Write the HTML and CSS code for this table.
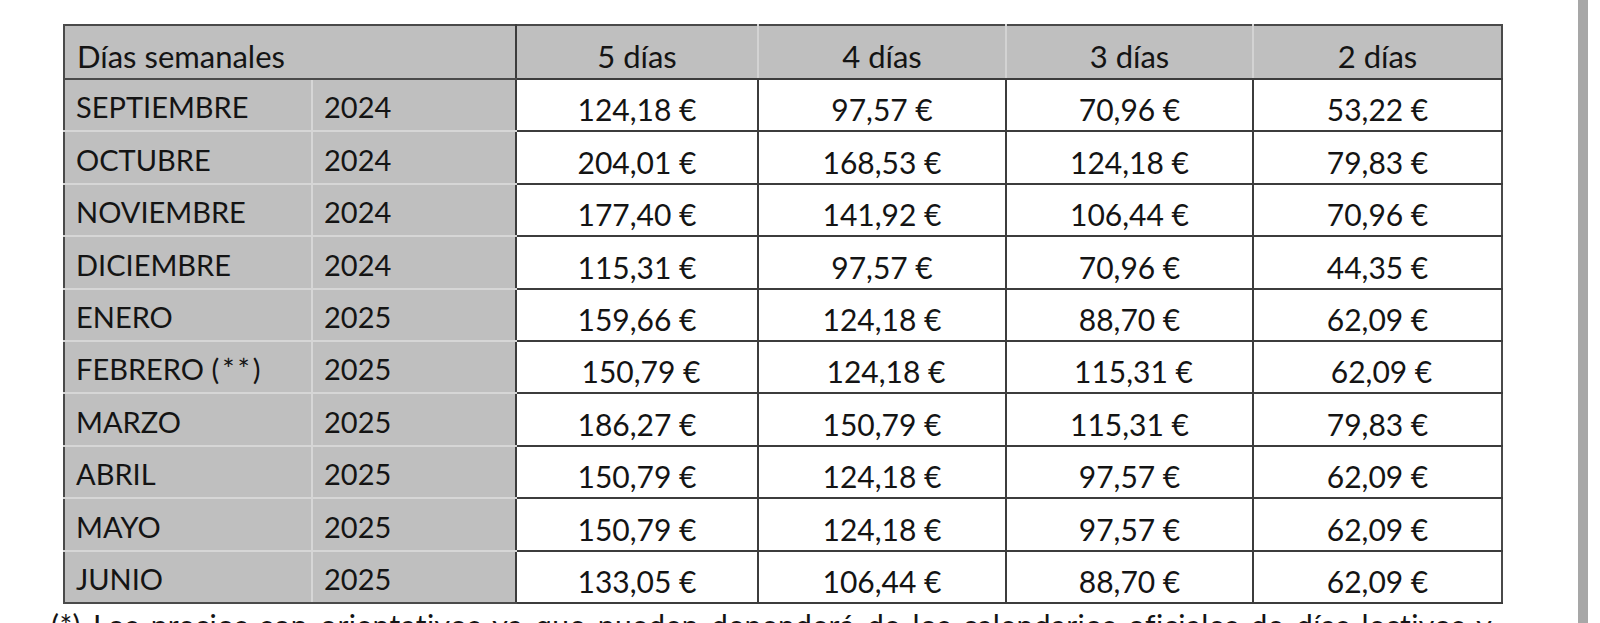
FILE: index.html
```html
<!DOCTYPE html>
<html lang="es">
<head>
<meta charset="utf-8">
<title>Precios</title>
<link rel="stylesheet" href="styles.css">
</head>
<body>
<div class="screen">
  <main class="page">
    <table class="prices">
      <colgroup>
        <col class="c-month"><col class="c-year"><col class="c-d5"><col class="c-d4"><col class="c-d3"><col class="c-d2">
      </colgroup>
      <thead>
        <tr class="head">
          <th class="label" colspan="2">Días semanales</th>
          <th class="day">5 días</th>
          <th class="day">4 días</th>
          <th class="day">3 días</th>
          <th class="day last">2 días</th>
        </tr>
      </thead>
      <tbody>
        <tr><td class="month">SEPTIEMBRE</td><td class="year">2024</td><td class="price">124,18 €</td><td class="price">97,57 €</td><td class="price">70,96 €</td><td class="price">53,22 €</td></tr>
        <tr><td class="month">OCTUBRE</td><td class="year">2024</td><td class="price">204,01 €</td><td class="price">168,53 €</td><td class="price">124,18 €</td><td class="price">79,83 €</td></tr>
        <tr><td class="month">NOVIEMBRE</td><td class="year">2024</td><td class="price">177,40 €</td><td class="price">141,92 €</td><td class="price">106,44 €</td><td class="price">70,96 €</td></tr>
        <tr><td class="month">DICIEMBRE</td><td class="year">2024</td><td class="price">115,31 €</td><td class="price">97,57 €</td><td class="price">70,96 €</td><td class="price">44,35 €</td></tr>
        <tr><td class="month">ENERO</td><td class="year">2025</td><td class="price">159,66 €</td><td class="price">124,18 €</td><td class="price">88,70 €</td><td class="price">62,09 €</td></tr>
        <tr class="shift"><td class="month">FEBRERO <span class="ast">(**)</span></td><td class="year">2025</td><td class="price">150,79 €</td><td class="price">124,18 €</td><td class="price">115,31 €</td><td class="price">62,09 €</td></tr>
        <tr><td class="month">MARZO</td><td class="year">2025</td><td class="price">186,27 €</td><td class="price">150,79 €</td><td class="price">115,31 €</td><td class="price">79,83 €</td></tr>
        <tr><td class="month">ABRIL</td><td class="year">2025</td><td class="price">150,79 €</td><td class="price">124,18 €</td><td class="price">97,57 €</td><td class="price">62,09 €</td></tr>
        <tr><td class="month">MAYO</td><td class="year">2025</td><td class="price">150,79 €</td><td class="price">124,18 €</td><td class="price">97,57 €</td><td class="price">62,09 €</td></tr>
        <tr class="end"><td class="month">JUNIO</td><td class="year">2025</td><td class="price">133,05 €</td><td class="price">106,44 €</td><td class="price">88,70 €</td><td class="price">62,09 €</td></tr>
      </tbody>
    </table>
    <p class="note">(*) Los precios son orientativos ya que pueden dependerá de los calendarios oficiales de días lectivos y</p>
  </main>
  <div class="edge"></div>
</div>
</body>
</html>
```
FILE: styles.css
```css
html, body {
  margin: 0;
  padding: 0;
  overflow: hidden;
  background: #ffffff;
}

body {
  font-family: Lato, "Liberation Sans", sans-serif;
  color: #141414;
}

.screen {
  display: flex;
  height: 623px;
}

.page {
  flex: 0 0 1578px;
  padding: 24px 0 0 63px;
  box-sizing: border-box;
}

.edge {
  flex: 0 0 10px;
  background: #a7a7a7;
}

.prices {
  border-collapse: collapse;
  table-layout: fixed;
  width: 1438px;
  font-size: 29px;
  line-height: 1;
}

.c-month { width: 248px; }
.c-year { width: 204px; }
.c-d5 { width: 242px; }
.c-d4 { width: 248px; }
.c-d3 { width: 247px; }
.c-d2 { width: 249px; }

.prices th,
.prices td {
  padding: 0;
  font-weight: 400;
  vertical-align: bottom;
  white-space: nowrap;
}

.head { height: 54px; }
.prices tbody tr { height: 52.4px; }

.label {
  background: #bfbfbf;
  text-align: left;
  font-size: 31px;
  padding: 0 0 6px 12px !important;
  border-top: 2px solid #4a4a4a;
  border-left: 2px solid #4a4a4a;
  border-bottom: 2px solid #4a4a4a;
  border-right: 2px solid #3c3c3c;
}

.day {
  background: #bfbfbf;
  text-align: center;
  font-size: 31px;
  padding-bottom: 6px !important;
  border-top: 2px solid #4a4a4a;
  border-bottom: 2px solid #3c3c3c;
  border-right: 2px solid #d3d3d3;
}

.day.last { border-right: 2px solid #4a4a4a; }

.month {
  background: #bfbfbf;
  text-align: left;
  padding: 0 0 9px 11px !important;
  border-left: 2px solid #4a4a4a;
  border-bottom: 2px solid #d6d6d6;
  border-right: 2px solid #d6d6d6;
}

.ast { letter-spacing: 3px; }

.year {
  background: #bfbfbf;
  text-align: left;
  padding: 0 0 9px 11px !important;
  border-bottom: 2px solid #d6d6d6;
  border-right: 2px solid #3c3c3c;
}

.price {
  background: #ffffff;
  text-align: center;
  font-size: 30px;
  padding-bottom: 6px !important;
  border: 2px solid #3c3c3c;
}

.prices tr.end td { border-bottom: 2px solid #4a4a4a; }
.prices tr.end td.price { border-bottom: 2px solid #3c3c3c; }
.prices td.price:last-child, .day.last { border-right-color: #4a4a4a; }

.shift .price { padding-left: 8px !important; }

.note {
  margin: 3px 0 0 -12px;
  font-size: 30px;
  line-height: 1.2;
  letter-spacing: 0.4px;
  word-spacing: 4px;
  white-space: nowrap;
}
```
